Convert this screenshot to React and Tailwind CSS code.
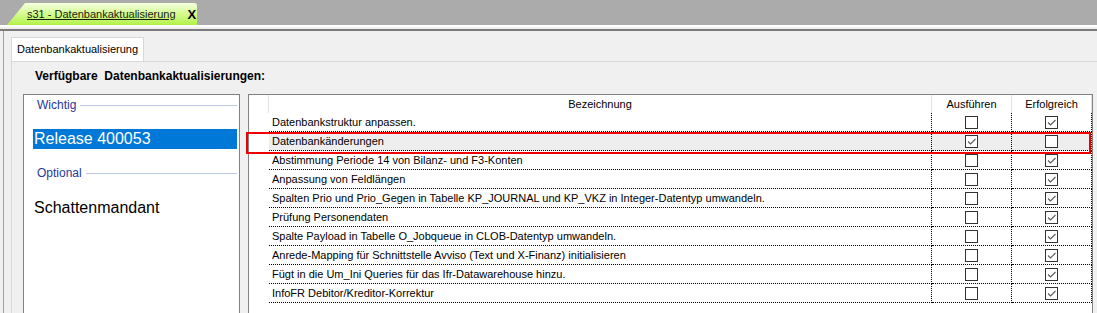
import React from 'react';

const rows = [
  { text: 'Datenbankstruktur anpassen.', run: false, ok: true },
  { text: 'Datenbankänderungen', run: true, ok: false, selected: true },
  { text: 'Abstimmung Periode 14 von Bilanz- und F3-Konten', run: false, ok: true },
  { text: 'Anpassung von Feldlängen', run: false, ok: true },
  { text: 'Spalten Prio und Prio_Gegen in Tabelle KP_JOURNAL und KP_VKZ in Integer-Datentyp umwandeln.', run: false, ok: true },
  { text: 'Prüfung Personendaten', run: false, ok: true },
  { text: 'Spalte Payload in Tabelle O_Jobqueue in CLOB-Datentyp umwandeln.', run: false, ok: true },
  { text: 'Anrede-Mapping für Schnittstelle Avviso (Text und X-Finanz) initialisieren', run: false, ok: true },
  { text: 'Fügt in die Um_Ini Queries für das Ifr-Datawarehouse hinzu.', run: false, ok: true },
  { text: 'InfoFR Debitor/Kreditor-Korrektur', run: false, ok: true },
];

function CheckBox({ on }) {
  return (
    <span className="w-[13px] h-[13px] border border-[#333333] bg-white flex items-center justify-center">
      {on && (
        <svg width="11" height="11" viewBox="0 0 11 11">
          <path d="M2 5.5 L4.5 8 L9.5 3" fill="none" stroke="#5a5a5a" strokeWidth="1.1" />
        </svg>
      )}
    </span>
  );
}

function GroupHeader({ label }) {
  return (
    <div className="flex items-center pl-[13px] pr-[2px]">
      <span className="text-[12px] leading-[14px] text-[#26389e]">{label}</span>
      <span className="flex-1 h-px bg-[#bcc8e6] ml-[4px]" />
    </div>
  );
}

export default function App() {
  return (
    <div className="w-[1097px] h-[313px] overflow-hidden bg-[#f0f0f0] font-['Liberation_Sans',Arial,sans-serif] text-[11px] text-black">
      {/* document tab bar */}
      <div className="h-[25px] bg-[#ababab] flex items-end pl-[7px]">
        <div className="h-[22px] w-[190px] rounded-tr-[3px] [clip-path:polygon(18px_0,100%_0,100%_100%,0_100%)] bg-gradient-to-b from-[#f4ffe0] via-[#d4fb8c] to-[#b2f244] flex items-center pl-[20px]">
          <span className="underline text-[11px] text-[#1a1a1a]">s31 - Datenbankaktualisierung</span>
          <span className="ml-[12px] font-bold text-[13px] leading-none">X</span>
        </div>
      </div>
      <div className="h-[2px] bg-white" />
      <div className="h-[2px] bg-[#f0f0f0]" />
      <div className="h-[2px] bg-[#7a7a7a]" />

      <div className="ml-[3px] border-l border-[#a0a0a0] h-[282px] pl-[7px] pt-[6px]">
        {/* tab strip */}
        <div className="flex">
          <div className="h-[24px] px-[5px] bg-white border border-b-0 border-[#d9d9d9] flex items-center">
            Datenbankaktualisierung
          </div>
        </div>

        <div className="border-t border-l border-[#d9d9d9] h-[260px] pl-[11px]">
          <div className="pt-[7px] pl-[12px] font-bold text-[12px] leading-[14px] whitespace-pre">
            Verfügbare  Datenbankaktualisierungen:
          </div>

          <div className="flex gap-[8px] mt-[11px]">
            {/* left list */}
            <div className="w-[217px] h-[230px] border border-[#828282] bg-white pt-[3px]">
              <GroupHeader label="Wichtig" />
              <div className="mt-[17px] ml-[9px] mr-[2px] h-[20px] bg-[#0078d7] text-white text-[16px] leading-[20px] pl-[1px]">
                Release 400053
              </div>
              <div className="mt-[17px]">
                <GroupHeader label="Optional" />
              </div>
              <div className="mt-[18px] pl-[10px] text-[16px] leading-[20px]">Schattenmandant</div>
            </div>

            {/* grid */}
            <div className="relative w-[845px] h-[230px] border border-[#828282] bg-white">
              <div className="flex h-[18px]">
                <div className="w-[20px] border-r border-[#e3e3e3]" />
                <div className="w-[663px] border-r border-[#e3e3e3] flex items-center justify-center">Bezeichnung</div>
                <div className="w-[80px] border-r border-[#e3e3e3] flex items-center justify-center">Ausführen</div>
                <div className="w-[80px] border-r border-[#e3e3e3] flex items-center justify-center">Erfolgreich</div>
              </div>

              {rows.map((r) => (
                <div key={r.text} className="flex h-[19px]">
                  <div className="w-[20px]" />
                  <div className={`w-[663px] border-r border-b border-dotted border-black flex items-center pl-[3px] whitespace-nowrap ${r.selected ? 'bg-[#eeeeee]' : ''}`}>
                    {r.text}
                  </div>
                  <div className={`w-[80px] border-r border-b border-dotted border-black flex items-center justify-center ${r.selected ? 'bg-[#eeeeee]' : ''}`}>
                    <CheckBox on={r.run} />
                  </div>
                  <div className={`w-[80px] border-r border-b border-dotted border-black flex items-center justify-center ${r.selected ? 'bg-[#eeeeee]' : ''}`}>
                    <CheckBox on={r.ok} />
                  </div>
                </div>
              ))}

              {/* highlight around selected row */}
              <div className="absolute left-[-3px] top-[37px] w-[845px] h-[22px] border-2 border-[#ee0000] pointer-events-none" />
            </div>
          </div>
        </div>
      </div>
    </div>
  );
}
